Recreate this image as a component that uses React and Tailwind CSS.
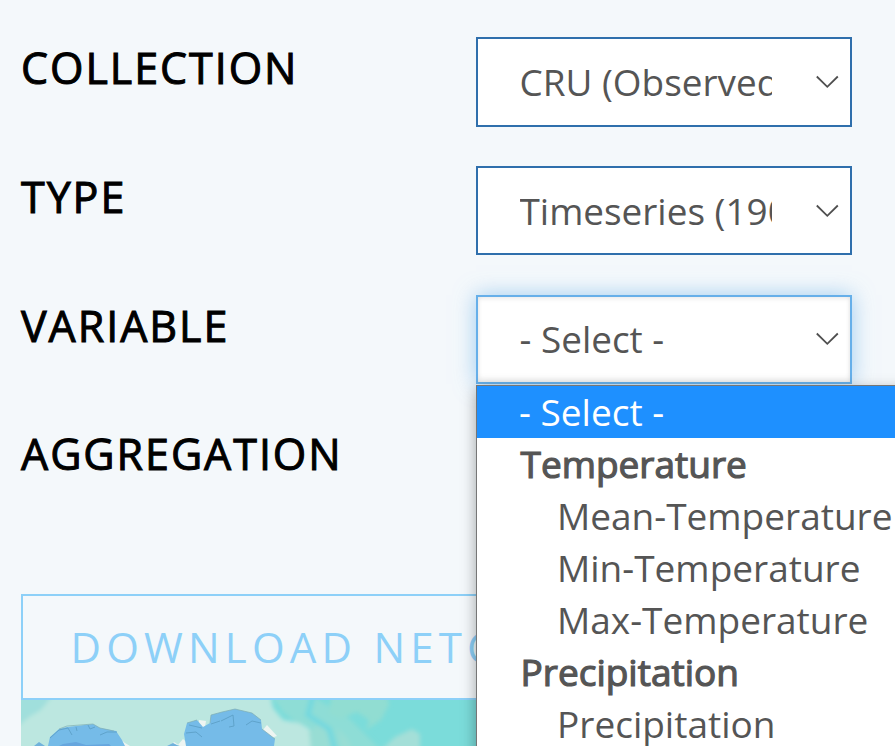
const font = "font-['Open_Sans','Noto_Sans',sans-serif]";

function Chevron() {
  return (
    <svg width="24" height="14" viewBox="0 0 24 14" fill="none" className="shrink-0">
      <path d="M1.8 1.5 L12.3 11.8 L22.8 1.5" stroke="#4f4f4f" strokeWidth="1.8" />
    </svg>
  );
}

function SelectBox({ value, focused, tall }) {
  return (
    <div
      className={
        "flex w-[376px] shrink-0 items-center justify-between border-2 bg-white pl-[41.5px] pr-[11px] " +
        (tall ? "h-[90px] " : "h-[89px] ") +
        (focused
          ? "border-[#66afe9] pb-[2px] shadow-[inset_0_2px_4px_rgba(0,0,0,0.08),inset_0_-3px_5px_rgba(0,0,0,0.07),0_0_20px_rgba(102,175,233,0.6)]"
          : "border-[#2f6fac]")
      }
    >
      <span className="w-[252.5px] overflow-hidden whitespace-nowrap text-[36.9px] leading-[52px] text-[#555]">
        {value}
      </span>
      <Chevron />
    </div>
  );
}

function Row({ label, children }) {
  return (
    <div className="flex h-[129px] items-start">
      <div className="w-[455px] shrink-0 whitespace-nowrap text-[43px] leading-[62px] tracking-[1.95px] text-black [-webkit-text-stroke:1px_black]">
        {label}
      </div>
      {children}
    </div>
  );
}

function MapStrip() {
  return (
    <svg width="874" height="46" viewBox="0 0 874 46" className="block">
      <defs>
        <filter id="soft" x="-20%" y="-20%" width="140%" height="140%">
          <feGaussianBlur stdDeviation="2" />
        </filter>
        <filter id="fine" x="-10%" y="-10%" width="120%" height="120%">
          <feGaussianBlur stdDeviation="0.6" />
        </filter>
      </defs>
      <rect width="874" height="46" fill="#7bdcda" />
      <g filter="url(#soft)">
        <path d="M250 -5L262 12 275 22 292 28 302 50H360L330 20 290 -5Z" fill="#8eddd6" />
        <path d="M-5 -5H249L252 8 262 20 278 23 289 29 295 38 296 50H-5Z" fill="#bce7e0" />
        <path d="M-5 -5H32L20 10 8 17 -5 28Z" fill="#a0dfdc" />
        <path d="M310 -5L308 14 320 19 336 12 348 20 345 30 360 20 368 5 366 -5Z" fill="#91ddd2" />
        <path d="M288 30L300 24 310 38 308 50H290Z M316 28L326 38 332 50H320Z" fill="#98ddd4" />
        <path d="M360 50L374 37 391 29 399 34 399 50Z" fill="#a4dfd8" />
        <path d="M292 -5L287 15 308 29 314 50" stroke="#72d8df" strokeWidth="5" fill="none" />
      </g>
      <g filter="url(#fine)">
        <path d="M149 46L153 42 159 46Z M97 37L104 43 109 46H99Z M162 39L156 46H170Z M185 21L184 27 178 27 178 20Z M246 25L256 36 250 38 241 31Z" fill="#eef5f2" />
        <path d="M27 46L29 37 38 29 46 27 55 26 72 24 79 28 95 31 101 40 104 46Z" fill="#75bbe8" />
        <path d="M165 46L163 34 166 23 176 20 182 27 189 23 190 15 201 12 214 9 231 13 240 20 241 29 254 39 253 46Z" fill="#75bbe8" />
        <path d="M13 46L18 42 24 46Z M146 46L152 43 158 46Z" fill="#6fb2dc" />
        <path d="M42 44L55 42 65 45 88 44 90 46H38Z" fill="#66a6de" />
        <path d="M29 38L38 30 47 28 51 35 M55 27L56 31 M67 25L69 29 74 27 M79 35L86 32 96 32 M165 33L175 32 181 37 M168 25L181 28 M190 24L199 21 M200 21L212 15 213 26 208 27 M225 25L231 21 240 23" stroke="#5fa3cb" strokeWidth="1" fill="none" />
        <path d="M38 29L46 26 72 24 79 28 93 31 M166 23L176 20 M189 23L190 15 201 12 214 9 231 13 240 20 M241 29L254 39" stroke="#80aeb1" strokeWidth="0.7" fill="none" />
      </g>
    </svg>
  );
}

const options = [
  { text: "Temperature", group: true },
  { text: "Mean-Temperature" },
  { text: "Min-Temperature" },
  { text: "Max-Temperature" },
  { text: "Precipitation", group: true },
  { text: "Precipitation" },
];

export default function App() {
  return (
    <div className={"relative h-[746px] w-[895px] overflow-hidden bg-[#f4f8fb] pl-[21px] pt-[37px] " + font}>
      <Row label="COLLECTION">
        <SelectBox value="CRU (Observed)" tall />
      </Row>
      <Row label="TYPE">
        <SelectBox value="Timeseries (1901-2016)" />
      </Row>
      <Row label="VARIABLE">
        <SelectBox value="- Select -" focused />
      </Row>
      <div className="-mt-px">
        <Row label="AGGREGATION" />
      </div>
      <div className="mt-[42px] flex h-[106px] w-[874px] items-center border-2 border-[#8dd0f8] pb-[2px] pl-[47.5px] text-[42px] tracking-[5.2px] whitespace-nowrap text-[#8dd0f8]">
        DOWNLOAD NETCDF
      </div>
      <MapStrip />
      <div className="absolute left-[476px] top-[385px] h-[400px] w-[460px] border border-[#767676] bg-white text-[37px] leading-[52px] whitespace-nowrap text-[#555] shadow-[0_5px_14px_rgba(0,0,0,0.35)]">
        <div className="bg-[#1e90ff] pl-[42px] text-white">- Select -</div>
        {options.map((o, i) => (
          <div key={i} className={o.group ? "pl-[43.5px] [-webkit-text-stroke:1.2px_#555]" : "pl-[80px]"}>
            {o.text}
          </div>
        ))}
      </div>
    </div>
  );
}
